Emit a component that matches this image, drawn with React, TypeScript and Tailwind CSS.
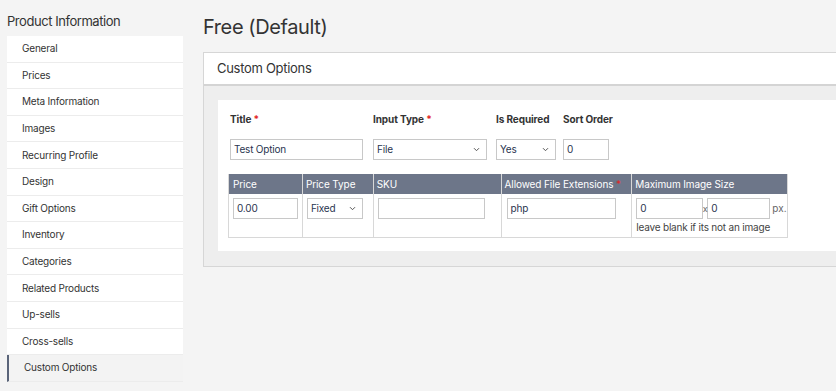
import React from "react";

const items = [
  "General",
  "Prices",
  "Meta Information",
  "Images",
  "Recurring Profile",
  "Design",
  "Gift Options",
  "Inventory",
  "Categories",
  "Related Products",
  "Up-sells",
  "Cross-sells",
];

function Chevron() {
  return (
    <svg width="7" height="5" viewBox="0 0 7 5" className="shrink-0">
      <path d="M1 1.2l2.5 2.5 2.5-2.5" fill="none" stroke="#555" strokeWidth="1" />
    </svg>
  );
}

function Select({ value, w }: { value: string; w: string }) {
  return (
    <div className={`${w} h-[21px] border border-[#c8c8c8] bg-white flex items-center justify-between pl-[3px] pr-[6px] text-[10px] tracking-[-0.2px] text-[#2a3550]`}>
      <span>{value}</span>
      <Chevron />
    </div>
  );
}

function Input({ value, w }: { value: string; w: string }) {
  return (
    <div className={`${w} h-[21px] border border-[#c8c8c8] bg-white flex items-center pl-[3px] text-[10px] tracking-[-0.2px] text-[#2a3550]`}>
      {value}
    </div>
  );
}

export default function App() {
  return (
    <div
      className="w-[836px] h-[391px] bg-[#f4f4f4] flex overflow-hidden text-[#333]"
      style={{ fontFamily: "Inter, 'Liberation Sans', sans-serif" }}
    >
      <div className="w-[176px] ml-[7px] shrink-0">
        <div className="h-[36px] pt-[13px] text-[13px] tracking-[-0.45px] text-[#333] leading-[17px]">Product Information</div>
        <div className="flex flex-col">
          {items.map((t) => (
            <div key={t} className="h-[26.6px] bg-white border-b border-[#ececec] flex items-center pl-[15px] text-[10px] tracking-[-0.2px] text-[#333]">
              {t}
            </div>
          ))}
          <div className="h-[26.6px] bg-[#f3f3f3] border-l-2 border-[#5a6479] border-b border-b-[#ececec] flex items-center pl-[15px] text-[10px] tracking-[-0.2px] text-[#333]">
            Custom Options
          </div>
        </div>
      </div>

      <div className="ml-[20px] flex-1 min-w-0">
        <div className="h-[52px] pt-[15px] text-[20px] tracking-[-0.4px] leading-[24px] text-[#333]">Free (Default)</div>
        <div className="w-[700px] border border-[#d6d6d6] bg-[#eeeeee] pb-[15px]">
          <div className="h-[33px] bg-white border-b-2 border-[#d4d4d4] flex items-center pl-[13px] text-[13px] tracking-[-0.3px] text-[#333]">
            Custom Options
          </div>
          <div className="ml-[14px] mt-[14px] bg-white h-[151px] pl-[12px] pt-[12px]">
            <div className="flex text-[10px] tracking-[-0.1px] font-bold text-[#333] h-[14px] leading-[14px]">
              <div className="w-[143px]">
                Title <span className="text-[#e22626]">*</span>
              </div>
              <div className="w-[123px]">
                Input Type <span className="text-[#e22626]">*</span>
              </div>
              <div className="w-[67px]">Is Required</div>
              <div>Sort Order</div>
            </div>
            <div className="flex mt-[13px]">
              <div className="w-[143px]"><Input value="Test Option" w="w-[133px]" /></div>
              <div className="w-[123px]"><Select value="File" w="w-[114px]" /></div>
              <div className="w-[67px]"><Select value="Yes" w="w-[60px]" /></div>
              <div><Input value="0" w="w-[46px]" /></div>
            </div>
            <div className="mt-[14px] ml-[-2px] w-[560px] border-l border-b border-[#d8d8d8]">
              <div className="flex h-[20px] bg-[#6d7689] text-white text-[10px] tracking-[-0.1px] leading-[20px]">
                <div className="w-[74px] pl-[4px] border-r border-[#d8d8d8]">Price</div>
                <div className="w-[71px] pl-[3px] border-r border-[#d8d8d8]">Price Type</div>
                <div className="w-[128px] pl-[3px] border-r border-[#d8d8d8]">SKU</div>
                <div className="w-[131px] pl-[3px] border-r border-[#d8d8d8] whitespace-nowrap">
                  Allowed File Extensions <span className="text-[#e22626]">*</span>
                </div>
                <div className="w-[156px] pl-[3px] border-r border-[#d8d8d8]">Maximum Image Size</div>
              </div>
              <div className="flex h-[43px]">
                <div className="w-[74px] pl-[4px] pt-[4px] border-r border-[#d8d8d8]"><Input value="0.00" w="w-[65px]" /></div>
                <div className="w-[71px] pl-[4px] pt-[4px] border-r border-[#d8d8d8]"><Select value="Fixed" w="w-[56px]" /></div>
                <div className="w-[128px] pl-[4px] pt-[4px] border-r border-[#d8d8d8]"><Input value="" w="w-[107px]" /></div>
                <div className="w-[131px] pl-[5px] pt-[4px] border-r border-[#d8d8d8]"><Input value="php" w="w-[109px]" /></div>
                <div className="w-[156px] pl-[4px] pt-[4px] border-r border-[#d8d8d8]">
                  <div className="flex items-center text-[10px] text-[#666]">
                    <Input value="0" w="w-[67px]" />
                    <span className="w-[4px] text-[9px] leading-none flex justify-center relative z-10">x</span>
                    <Input value="0" w="w-[63px]" />
                    <span className="ml-[2px]">px.</span>
                  </div>
                  <div className="text-[10px] tracking-[-0.2px] text-[#444] leading-[12px] mt-[2px]">leave blank if its not an image</div>
                </div>
              </div>
            </div>
          </div>
        </div>
      </div>
    </div>
  );
}
